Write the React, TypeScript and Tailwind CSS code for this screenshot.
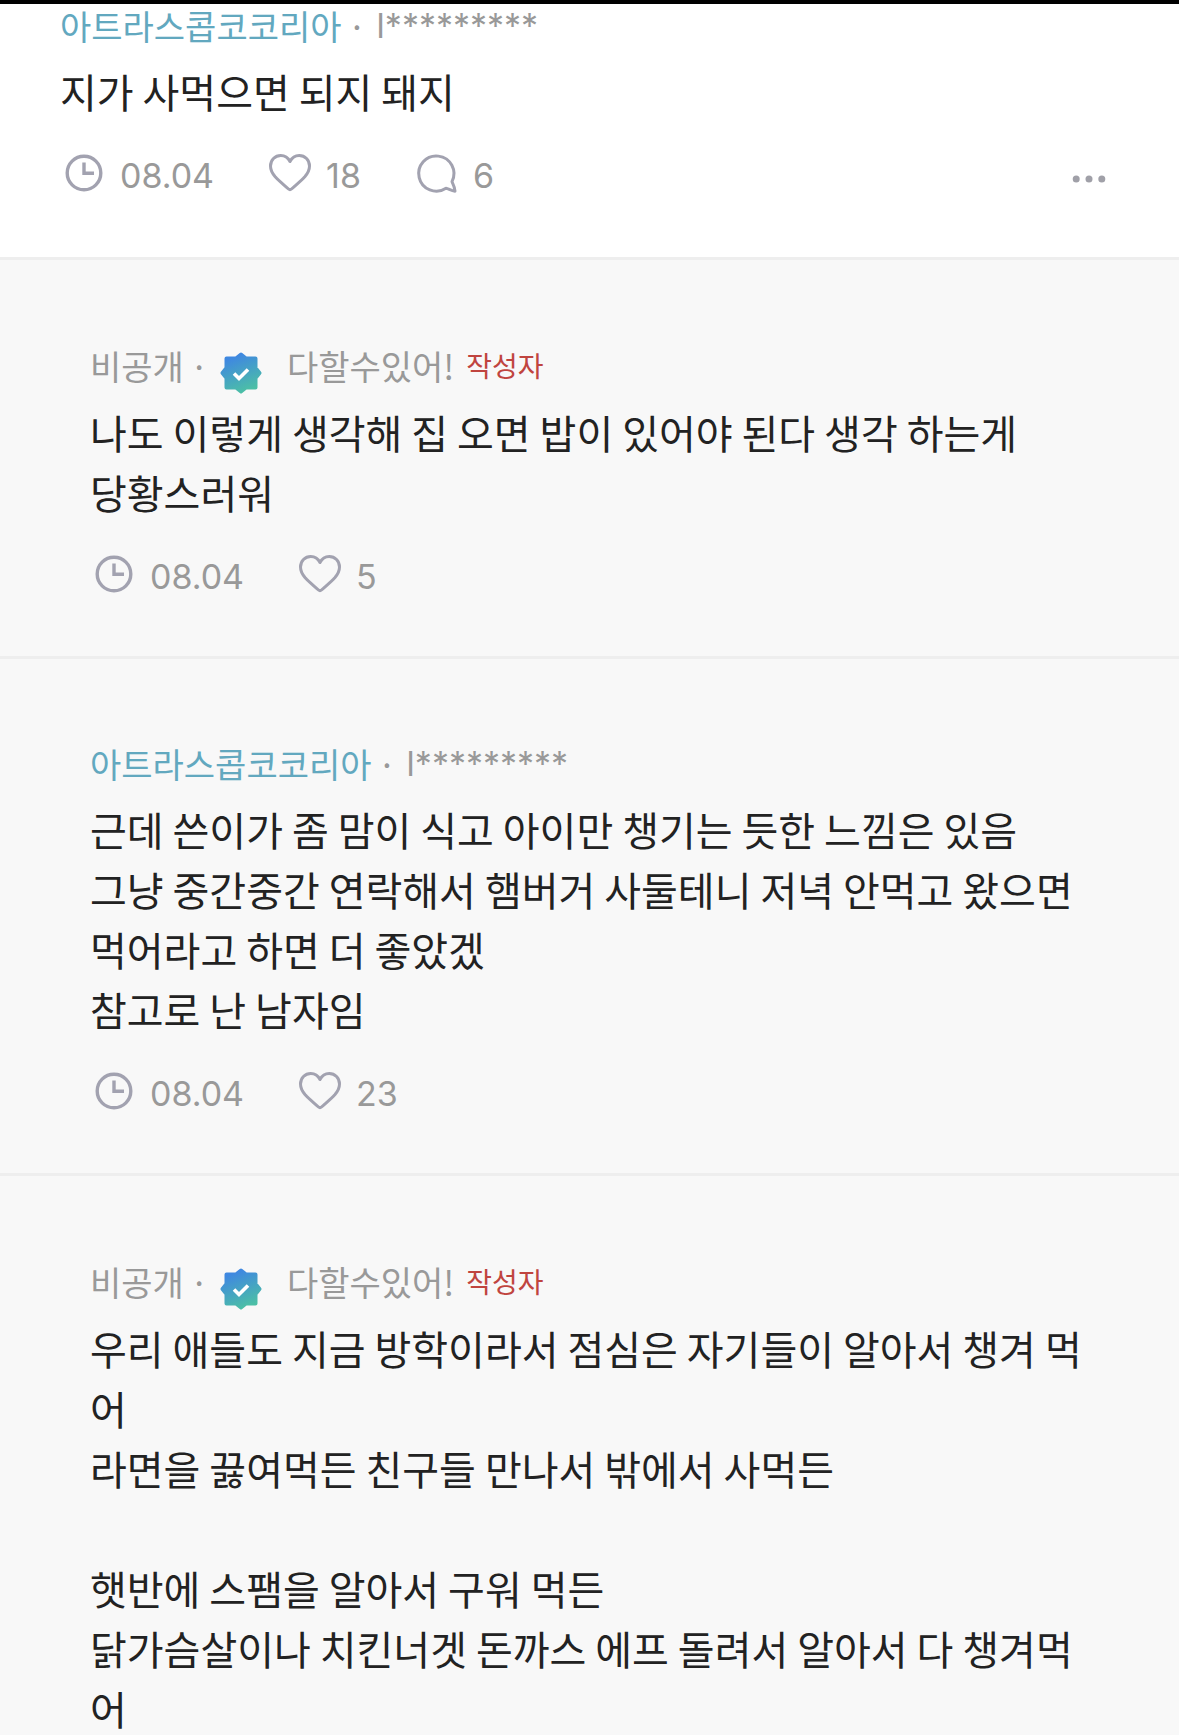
import type { ReactNode } from 'react';

type Comment = {
  id: number;
  company: string;
  nickname: string;
  isAuthor?: boolean;
  body: string;
  date: string;
  likes: number;
  replies?: number;
};

const COMMENT: Comment = {
  id: 1,
  company: '아트라스콥코코리아',
  nickname: 'l*********',
  body: '지가 사먹으면 되지 돼지',
  date: '08.04',
  likes: 18,
  replies: 6,
};

const REPLIES: Comment[] = [
  {
    id: 2,
    company: '비공개',
    nickname: '다할수있어!',
    isAuthor: true,
    body: '나도 이렇게 생각해 집 오면 밥이 있어야 된다 생각 하는게\n당황스러워',
    date: '08.04',
    likes: 5,
  },
  {
    id: 3,
    company: '아트라스콥코코리아',
    nickname: 'l*********',
    body: '근데 쓴이가 좀 맘이 식고 아이만 챙기는 듯한 느낌은 있음\n그냥 중간중간 연락해서 햄버거 사둘테니 저녁 안먹고 왔으면\n먹어라고 하면 더 좋았겠\n참고로 난 남자임',
    date: '08.04',
    likes: 23,
  },
];

const LAST_REPLY = {
  company: '비공개',
  nickname: '다할수있어!',
  body: '우리 애들도 지금 방학이라서 점심은 자기들이 알아서 챙겨 먹\n어\n라면을 끓여먹든 친구들 만나서 밖에서 사먹든\n\n햇반에 스팸을 알아서 구워 먹든\n닭가슴살이나 치킨너겟 돈까스 에프 돌려서 알아서 다 챙겨먹\n어',
};

function ClockIcon() {
  return (
    <svg viewBox="0 0 48 48" className="size-12" fill="none" stroke="#a2a2b0" strokeWidth="3.4" aria-hidden="true">
      <circle cx="24" cy="24" r="16.8" />
      <path d="M24 13.5V24.2H34" />
    </svg>
  );
}

function HeartIcon() {
  return (
    <svg viewBox="0 0 48 48" className="size-12" fill="none" stroke="#a2a2b0" strokeWidth="3" strokeLinejoin="round" aria-hidden="true">
      <path d="M24 12.5C22 8.6 18.8 6.5 14.8 6.5C9 6.5 4.5 11 4.5 17C4.5 21 6.2 24.2 9 27.5C13 32 18.5 36.3 22.5 40C23.5 40.9 24.5 40.9 25.5 40C29.5 36.3 35 32 39 27.5C41.8 24.2 43.5 21 43.5 17C43.5 11 39 6.5 33.2 6.5C29.2 6.5 26 8.6 24 12.5Z" />
    </svg>
  );
}

function BubbleIcon() {
  return (
    <svg viewBox="0 0 48 48" className="size-12" fill="none" stroke="#a2a2b0" strokeWidth="3" strokeLinejoin="round" aria-hidden="true">
      <path d="M39 32.6A17.6 17.6 0 1 0 33 39.3C35.5 39.6 38 41.9 42 42.2C41.8 39 40.6 36 39 32.6Z" />
    </svg>
  );
}

function MoreIcon() {
  return (
    <svg viewBox="0 0 48 48" className="size-12" fill="#a0a0a8" aria-hidden="true">
      <circle cx="11.2" cy="24" r="3.5" />
      <circle cx="24" cy="24" r="3.5" />
      <circle cx="36.8" cy="24" r="3.5" />
    </svg>
  );
}

function VerifiedBadge() {
  return (
    <svg viewBox="0 0 44 44" className="size-11" aria-hidden="true">
      <defs>
        <linearGradient id="badge" x1="0.2" y1="0" x2="0.6" y2="1">
          <stop offset="0.1" stopColor="#3f88e0" />
          <stop offset="1" stopColor="#4cbfa6" />
        </linearGradient>
      </defs>
      <path
        fill="url(#badge)"
        stroke="url(#badge)"
        strokeWidth="4"
        strokeLinejoin="round"
        d="M22 3.5L27 7.5H36.5V17L40.5 22L36.5 27V36.5H27L22 40.5L17 36.5H7.5V27L3.5 22L7.5 17V7.5H17Z"
      />
      <path d="M15 22.5L20 27.5L29 18.5" fill="none" stroke="#fff" strokeWidth="3.6" />
    </svg>
  );
}

function CommentHeader({ company, nickname, isAuthor }: { company: string; nickname: string; isAuthor?: boolean }) {
  if (isAuthor) {
    return (
      <header className="flex h-12.5 items-center text-[34px] text-[#999999]">
        <span>{company}</span>
        <span className="ml-1.5">·</span>
        <span className="mt-4 mr-6 ml-2.5">
          <VerifiedBadge />
        </span>
        <span>{nickname}</span>
        <span className="ml-3 text-[28px] text-[#c0443f]">작성자</span>
      </header>
    );
  }

  return (
    <header className="flex h-12 items-center text-[34px] text-[#999999]">
      <a href="#company" className="text-[#62a8bf]">
        {company}
      </a>
      <span className="mr-2.5 ml-1.5">·</span>
      <span className="font-['Inter',sans-serif]">{nickname}</span>
    </header>
  );
}

function CommentBody({ children }: { children: string }) {
  return <p className="mt-3 text-[40px] leading-[60px] whitespace-pre-wrap text-[#222222]">{children}</p>;
}

function Stat({ icon, children }: { icon: ReactNode; children: ReactNode }) {
  return (
    <span className="flex items-center gap-3">
      {icon}
      <span className="pt-1">{children}</span>
    </span>
  );
}

function CommentStats({ comment }: { comment: Comment }) {
  return (
    <footer className="mt-[26px] flex h-13 items-center gap-13 font-['Inter',sans-serif] text-[34px] text-[#999999]">
      <Stat icon={<ClockIcon />}>{comment.date}</Stat>
      <button type="button" aria-label="좋아요">
        <Stat icon={<HeartIcon />}>{comment.likes}</Stat>
      </button>
      {comment.replies !== undefined && (
        <>
          <button type="button" aria-label="답글">
            <Stat icon={<BubbleIcon />}>{comment.replies}</Stat>
          </button>
          <button type="button" aria-label="더보기" className="mt-3 mr-1.5 ml-auto">
            <MoreIcon />
          </button>
        </>
      )}
    </footer>
  );
}

export default function App() {
  return (
    <main className="h-screen overflow-hidden border-t-4 border-black bg-[#f8f8f8] font-['Noto_Sans_CJK_KR',sans-serif]">
      <article className="-mt-[3px] border-b-3 border-[#eeeeee] bg-white px-[60px] pb-14.5">
        <CommentHeader company={COMMENT.company} nickname={COMMENT.nickname} />
        <CommentBody>{COMMENT.body}</CommentBody>
        <CommentStats comment={COMMENT} />
      </article>

      {REPLIES.map((reply) => (
        <article key={reply.id} className="border-b-3 border-[#eeeeee] px-[90px] pt-20 pb-14">
          <CommentHeader company={reply.company} nickname={reply.nickname} isAuthor={reply.isAuthor} />
          <CommentBody>{reply.body}</CommentBody>
          <CommentStats comment={reply} />
        </article>
      ))}

      <article className="px-[90px] pt-20">
        <CommentHeader company={LAST_REPLY.company} nickname={LAST_REPLY.nickname} isAuthor />
        <CommentBody>{LAST_REPLY.body}</CommentBody>
      </article>
    </main>
  );
}
